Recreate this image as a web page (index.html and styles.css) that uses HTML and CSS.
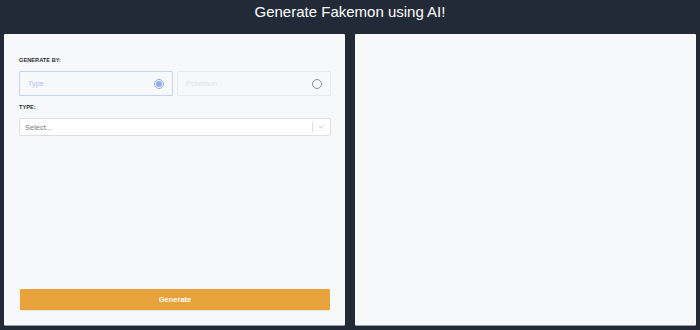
FILE: index.html
```html
<!DOCTYPE html>
<html>
<head>
<meta charset="utf-8">
<link rel="stylesheet" href="styles.css">
</head>
<body>
<header class="top">
  <h1 class="title">Generate Fakemon using AI!</h1>
</header>
<main class="panes">
  <section class="card form">
    <div class="label">GENERATE BY:</div>
    <div class="choices">
      <div class="choice active">
        <span class="choice-text">Type</span>
        <span class="radio on"><span class="dot"></span></span>
      </div>
      <div class="choice">
        <span class="choice-text">Pokémon</span>
        <span class="radio"></span>
      </div>
    </div>
    <div class="label type-label">TYPE:</div>
    <div class="select">
      <span class="placeholder">Select...</span>
      <span class="sep"></span>
      <svg class="chev" width="8" height="6" viewBox="0 0 8 6"><path d="M1.5 1.8 L4 4.2 L6.5 1.8" fill="none" stroke="#c4c8cf" stroke-width="0.9"/></svg>
    </div>
    <div class="spacer"></div>
    <button class="generate">Generate</button>
  </section>
  <section class="card output"></section>
</main>
</body>
</html>
```
FILE: styles.css
```css
* { box-sizing: border-box; }
html, body { margin: 0; padding: 0; }
body {
  background: #222a37;
  width: 700px;
  height: 330px;
  overflow: hidden;
  font-family: "Liberation Sans", Arial, sans-serif;
}
.top {
  height: 34px;
  display: flex;
  justify-content: center;
}
.title {
  margin: 0;
  padding-top: 1px;
  font-size: 15px;
  font-weight: normal;
  line-height: 22px;
  color: #ffffff;
}
.panes {
  display: flex;
  gap: 10px;
  padding: 0 4px 5px 4px;
  height: 296px;
}
.card {
  flex: none;
  width: 341px;
  background: #f7f8fa;
  border-radius: 1px;
  box-shadow: 0 1px 0 #9aa0a8;
  height: 291px;
}
.form {
  display: flex;
  flex-direction: column;
  padding: 23px 14px 15px 15px;
}
.label {
  font-size: 5.6px;
  font-weight: bold;
  line-height: 7px;
  color: #2a2f38;
  letter-spacing: 0.05px;
}
.choices {
  display: flex;
  gap: 4px;
  margin-top: 7px;
}
.choice {
  flex: 1 1 0;
  min-width: 0;
  height: 25px;
  border: 1px solid #e6e9ee;
  border-radius: 1px;
  display: flex;
  align-items: center;
  justify-content: space-between;
  padding: 0 8px 0 8px;
}
.choice.active {
  border-color: #c4d3f1;
}
.choice-text {
  font-size: 7.3px;
  color: #e0e3e8;
}
.choice.active .choice-text {
  color: #aec2ee;
}
.radio {
  width: 10px;
  height: 10px;
  border-radius: 50%;
  border: 1px solid #8a8e95;
  display: flex;
  align-items: center;
  justify-content: center;
}
.radio.on {
  border-color: #8eaaf0;
}
.dot {
  width: 6px;
  height: 6px;
  border-radius: 50%;
  background: #8eaaf0;
}
.type-label {
  margin-top: 8px;
}
.select {
  margin-top: 7px;
  height: 18px;
  background: #ffffff;
  border: 1px solid #dcdfe4;
  border-radius: 2px;
  display: flex;
  align-items: center;
  padding: 0 5px 0 5px;
}
.placeholder {
  flex: 1;
  font-size: 7.5px;
  color: #7a7e85;
}
.sep {
  width: 1px;
  height: 11px;
  background: #dcdfe4;
  margin-right: 4px;
}
.chev { display: block; }
.spacer { flex: 1; }
.generate {
  margin: 0 1px;
  height: 21px;
  border: none;
  border-radius: 1px;
  background: #e8a23b;
  color: #ffffff;
  font-family: "Liberation Sans", Arial, sans-serif;
  font-size: 7.5px;
  font-weight: bold;
  box-shadow: 0 1px 0 #f0e6d8;
}
```
